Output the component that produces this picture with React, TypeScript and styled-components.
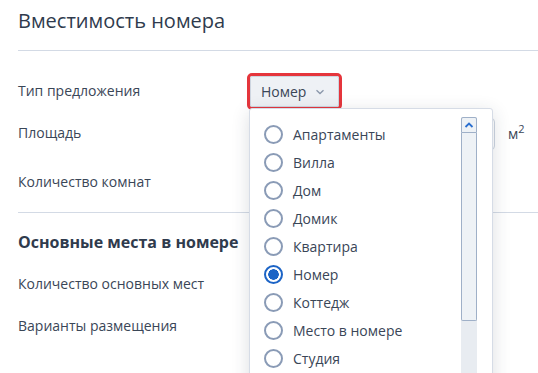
import styled, { createGlobalStyle } from "styled-components";

const GlobalStyle = createGlobalStyle`
  html {
    overflow: hidden;
  }
  body {
    margin: 0;
    padding: 0;
    min-height: 373px;
    background: #ffffff;
    font-family: "Open Sans", "Noto Sans", sans-serif;
    color: #3a4657;
  }
`;

const options = [
  "Апартаменты",
  "Вилла",
  "Дом",
  "Домик",
  "Квартира",
  "Номер",
  "Коттедж",
  "Место в номере",
  "Студия",
];

export default function App() {
  const selected = "Номер";

  return (
    <>
      <GlobalStyle />
      <StyledPage>
        <StyledTitle>Вместимость номера</StyledTitle>
        <StyledDivider />
        <StyledSection>
          <StyledRow height={42}>
            <StyledLabel>Тип предложения</StyledLabel>
            <StyledControl>
              <StyledFocusRing>
                <StyledSelectButton>
                  Номер
                  <svg width="10" height="6" viewBox="0 0 10 6">
                    <path
                      d="M1.5 1.2 L5 4.5 L8.5 1.2"
                      fill="none"
                      stroke="#8a97aa"
                      strokeWidth="1.3"
                    />
                  </svg>
                </StyledSelectButton>
              </StyledFocusRing>
              <StyledMenu>
                <StyledList>
                  {options.map((o) => (
                    <StyledOption key={o}>
                      <StyledRadio checked={o === selected} />
                      {o}
                    </StyledOption>
                  ))}
                </StyledList>
                <StyledScrollbar>
                  <StyledScrollUp>
                    <svg width="10" height="6" viewBox="0 0 10 6">
                      <path
                        d="M1.5 5 L5 1.5 L8.5 5"
                        fill="none"
                        stroke="#2a6fd0"
                        strokeWidth="1.8"
                      />
                    </svg>
                  </StyledScrollUp>
                  <StyledThumb />
                </StyledScrollbar>
              </StyledMenu>
            </StyledControl>
          </StyledRow>
          <StyledRow height={42}>
            <StyledLabel>Площадь</StyledLabel>
            <StyledControl>
              <StyledInput />
              <StyledUnit>
                м<sup>2</sup>
              </StyledUnit>
            </StyledControl>
          </StyledRow>
          <StyledRow height={56}>
            <StyledLabel>Количество комнат</StyledLabel>
          </StyledRow>
        </StyledSection>
        <StyledDivider />
        <StyledSubtitle>Основные места в номере</StyledSubtitle>
        <StyledRow height={42}>
          <StyledLabel>Количество основных мест</StyledLabel>
        </StyledRow>
        <StyledRow height={42}>
          <StyledLabel>Варианты размещения</StyledLabel>
        </StyledRow>
      </StyledPage>
    </>
  );
}

const StyledPage = styled.div`
  padding: 0 0 0 18px;
`;

const StyledTitle = styled.h1`
  margin: 0;
  padding-top: 7px;
  height: 50px;
  box-sizing: border-box;
  font-size: 20px;
  font-weight: 400;
  line-height: 28px;
  color: #2f3b4d;
`;

const StyledDivider = styled.div`
  height: 1px;
  background: #d3dae5;
`;

const StyledSection = styled.div`
  padding: 19px 0 2px;
`;

const StyledRow = styled.div<{ height: number }>`
  display: flex;
  align-items: center;
  height: ${({ height }) => height}px;
`;

const StyledLabel = styled.div`
  width: 231px;
  flex-shrink: 0;
  font-size: 14px;
  line-height: 20px;
  color: #3a4657;
`;

const StyledControl = styled.div`
  position: relative;
  display: flex;
  align-items: center;
  height: 42px;
`;

const StyledFocusRing = styled.div`
  border: 3px solid #e5353c;
  border-radius: 5px;
  margin-left: -2px;
`;

const StyledSelectButton = styled.button`
  display: flex;
  align-items: center;
  gap: 9px;
  height: 31px;
  padding: 0 13px 0 10px;
  border: 1px solid #cdd5e0;
  border-radius: 2px;
  background: #eef1f5;
  font-family: "Open Sans", "Noto Sans", sans-serif;
  font-size: 14px;
  color: #3a4657;
  & > svg {
    margin-top: 1px;
  }
`;

const StyledMenu = styled.div`
  position: absolute;
  top: 38px;
  left: 0;
  width: 244px;
  height: 300px;
  display: flex;
  background: #ffffff;
  border: 1px solid #d6dce6;
  border-radius: 3px;
  box-shadow: 0 4px 18px rgba(40, 50, 70, 0.16);
  z-index: 2;
  box-sizing: border-box;
`;

const StyledList = styled.div`
  flex: 1;
  padding: 11px 0 0 14px;
  overflow: hidden;
`;

const StyledOption = styled.div`
  display: flex;
  align-items: center;
  gap: 10px;
  height: 28px;
  font-size: 14px;
  color: #3a4657;
`;

const StyledRadio = styled.span<{ checked: boolean }>`
  width: 19px;
  height: 19px;
  box-sizing: border-box;
  border-radius: 50%;
  border: 2px solid ${({ checked }) => (checked ? "#1c64c6" : "#8a9bb6")};
  background: ${({ checked }) =>
    checked ? "radial-gradient(circle, #1c64c6 0 5px, #ffffff 5.5px)" : "#ffffff"};
`;

const StyledScrollbar = styled.div`
  width: 16px;
  margin: 8px 15px 0 0;
  background: #e8ecf1;
  display: flex;
  flex-direction: column;
`;

const StyledScrollUp = styled.div`
  height: 16px;
  display: flex;
  align-items: center;
  justify-content: center;
  box-sizing: border-box;
  border: 1px solid #9fb0c8;
  border-radius: 2px 2px 0 0;
  background: #eef2f6;
`;

const StyledThumb = styled.div`
  height: 188px;
  box-sizing: border-box;
  border: 1px solid #9fb0c8;
  border-top: none;
  border-radius: 0 0 2px 2px;
  background: #eef2f6;
`;

const StyledInput = styled.div`
  width: 246px;
  height: 32px;
  box-sizing: border-box;
  border: 1px solid #cdd5e0;
  border-radius: 4px;
  margin-top: 2px;
`;

const StyledUnit = styled.span`
  margin-left: 13px;
  font-size: 14px;
  color: #3a4657;
  & > sup {
    font-size: 11px;
    vertical-align: 6px;
    line-height: 0;
  }
`;

const StyledSubtitle = styled.h2`
  margin: 0;
  padding-top: 17px;
  height: 50px;
  box-sizing: border-box;
  font-size: 16px;
  font-weight: 700;
  line-height: 24px;
  color: #2f3b4d;
`;
